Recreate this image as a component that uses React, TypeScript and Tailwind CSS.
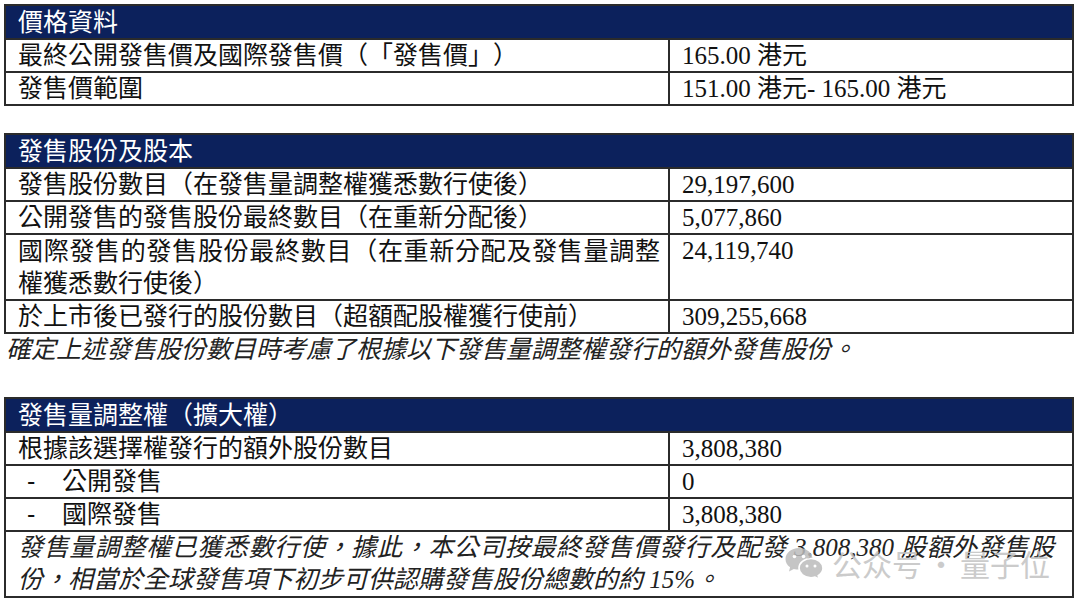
import React from 'react';

const sans = "[font-family:'Liberation_Sans','Noto_Sans_CJK_TC',sans-serif]";
const serif = "[font-family:'Liberation_Serif','Noto_Sans_CJK_TC',serif]";

function Header({ title }: { title: string }) {
  return (
    <div className={`h-[32px] bg-[#0c215c] pl-[12px] text-[25px] leading-[32px] text-white ${sans}`}>
      {title}
    </div>
  );
}

function Row({ label, value, lines = 1 }: { label: React.ReactNode; value: string; lines?: number }) {
  return (
    <div className="grid grid-cols-[664px_1fr] border-t-2 border-[#2b2b2b]">
      <div
        className={`border-r-2 border-[#2b2b2b] pl-[12px] pr-[8px] text-[25px] text-[#111] ${sans} ${
          lines === 2 ? 'h-[64px] leading-[32px]' : 'h-[31px] leading-[31px]'
        }`}
      >
        {label}
      </div>
      <div className={`pl-[12px] text-[25px] leading-[31px] text-[#111] ${serif}`}>{value}</div>
    </div>
  );
}

function Dash({ text }: { text: string }) {
  return (
    <span className="flex">
      <span className="inline-block w-[44px] pl-[9px]">-</span>
      <span>{text}</span>
    </span>
  );
}

function WeChatLogo() {
  return (
    <svg width="40" height="34" viewBox="0 0 40 34">
      <path d="M15 2C7.3 2 1.5 7 1.5 13c0 3.4 1.8 6.3 4.6 8.3L5 25.5l4.8-2.6c1.6.5 3.3.7 5.2.7 7.7 0 13.5-5 13.5-10.8S22.7 2 15 2z" fill="#bcbcbc" />
      <circle cx="10.5" cy="10.5" r="1.8" fill="#fff" />
      <circle cx="19.5" cy="10.5" r="1.8" fill="#fff" />
      <path d="M27 12.5c-6.8 0-12 4.4-12 9.6s5.2 9.6 12 9.6c1.4 0 2.8-.2 4-.6l4.2 2.2-1-3.6c2.8-1.8 4.8-4.5 4.8-7.6 0-5.2-5.2-9.6-12-9.6z" fill="#bcbcbc" stroke="#fff" strokeWidth="1.6" />
      <circle cx="23" cy="20" r="1.5" fill="#fff" />
      <circle cx="31" cy="20" r="1.5" fill="#fff" />
    </svg>
  );
}

export default function App() {
  return (
    <div className="relative h-[606px] w-[1080px] overflow-hidden bg-white pl-[4px] pt-[4px] [text-spacing-trim:space-all]">
      {/* 價格資料 */}
      <div className="w-[1070px] border-2 border-[#2b2b2b]">
        <Header title="價格資料" />
        <Row label="最終公開發售價及國際發售價（「發售價」）" value="165.00 港元" />
        <Row label="發售價範圍" value="151.00 港元- 165.00 港元" />
      </div>

      {/* 發售股份及股本 */}
      <div className="mt-[27px] w-[1070px] border-2 border-[#2b2b2b]">
        <Header title="發售股份及股本" />
        <Row label="發售股份數目（在發售量調整權獲悉數行使後）" value="29,197,600" />
        <Row label="公開發售的發售股份最終數目（在重新分配後）" value="5,077,860" />
        <Row
          lines={2}
          label={
            <>
              <span className="block text-justify [text-align-last:justify]">
                國際發售的發售股份最終數目（在重新分配及發售量調整
              </span>
              <span className="block">權獲悉數行使後）</span>
            </>
          }
          value="24,119,740"
        />
        <Row label="於上市後已發行的股份數目（超額配股權獲行使前）" value="309,255,668" />
      </div>
      <p className={`pl-[2px] text-[25px] italic leading-[32px] text-[#222] ${serif}`}>
        確定上述發售股份數目時考慮了根據以下發售量調整權發行的額外發售股份。
      </p>

      {/* 發售量調整權 */}
      <div className="mt-[31px] w-[1070px] border-2 border-[#2b2b2b]">
        <Header title="發售量調整權（擴大權）" />
        <Row label="根據該選擇權發行的額外股份數目" value="3,808,380" />
        <Row label={<Dash text="公開發售" />} value="0" />
        <Row label={<Dash text="國際發售" />} value="3,808,380" />
        <div className={`border-t-2 border-[#2b2b2b] pl-[12px] pr-[18px] text-[25px] italic leading-[32px] text-[#222] ${serif}`}>
          <span className="block text-justify [text-align-last:justify]">
            發售量調整權已獲悉數行使，據此，本公司按最終發售價發行及配發 3,808,380 股額外發售股
          </span>
          <span className="block">份，相當於全球發售項下初步可供認購發售股份總數的約 15%。</span>
        </div>
      </div>

      {/* watermark */}
      <div className="pointer-events-none absolute left-[784px] top-[546px] flex items-center gap-[8px] opacity-85">
        <WeChatLogo />
        <span className="text-[30px] leading-[34px] text-[#c2c2c2] [font-family:'Noto_Sans_CJK_SC',sans-serif]">
          公众号<span className="mx-[4px]">·</span>量子位
        </span>
      </div>
    </div>
  );
}
